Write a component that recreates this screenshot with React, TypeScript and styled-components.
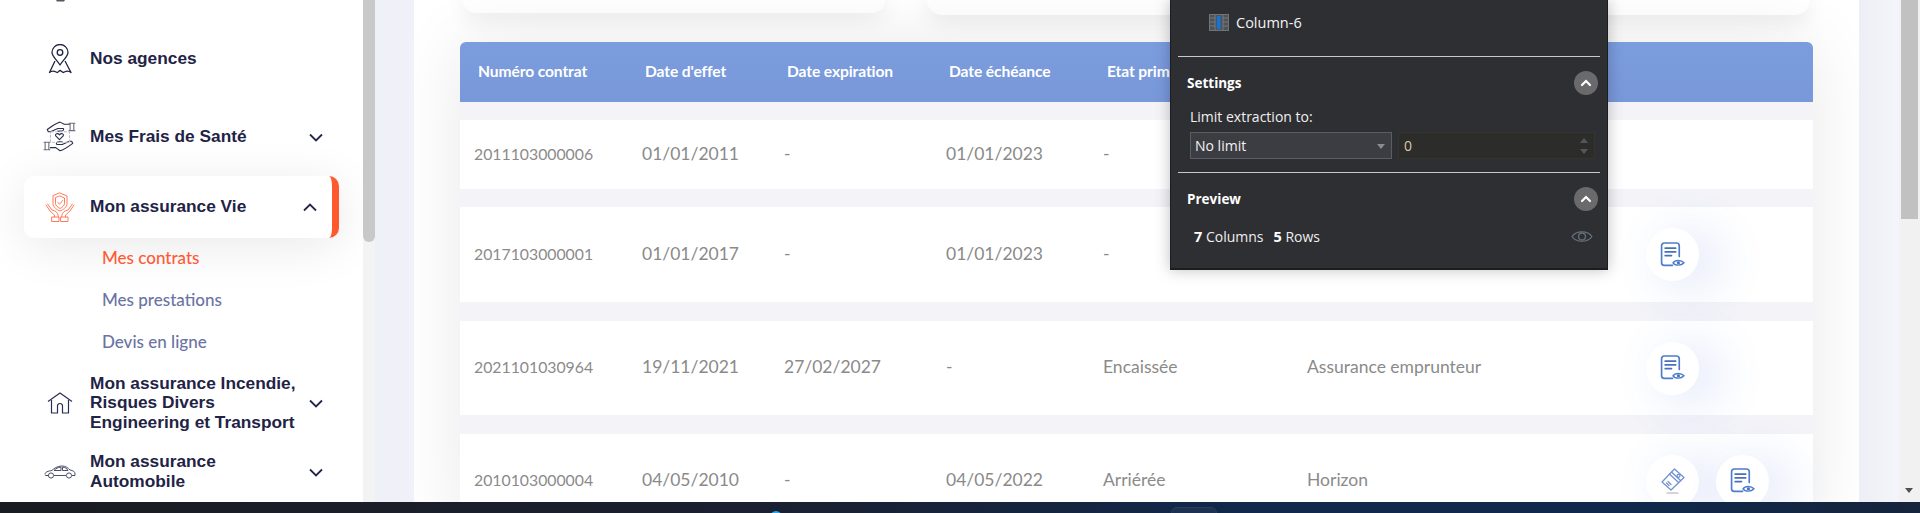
import React from "react";
import styled, { createGlobalStyle } from "styled-components";

const Global = createGlobalStyle`
  html, body { margin: 0; padding: 0; height: 100%; overflow: hidden; background: #fff; }
  * { box-sizing: border-box; }
`;

const Page = styled.div`
  position: relative; width: 1920px; height: 513px; overflow: hidden;
  display: flex; flex-direction: column;
`;
const Main = styled.div`
  position: relative; flex: none; height: 502px; display: flex; overflow: hidden; background: #f0f1f8;
`;
const Taskbar = styled.div`
  position: relative; flex: none; height: 11px; overflow: hidden;
  background: linear-gradient(90deg, #1b1c22 0%, #1a2030 40%, #11284a 65%, #10284a 85%, #16243c 100%);
`;
const TaskDot = styled.span`
  position: absolute; left: 770px; top: 9px; width: 12px; height: 12px; border-radius: 50%; background: #2aa7ee;
`;
const TaskPill = styled.span`
  position: absolute; left: 1171px; top: 5px; width: 46px; height: 12px; border-radius: 6px; background: #1f3150;
  border: 1px solid #2b3d5c;
`;

const Sidebar = styled.aside`
  flex: none; width: 363px; height: 100%; background: #fff; display: flex; flex-direction: column;
  font-family: "Liberation Sans", Arial, sans-serif; overflow: hidden;
`;
const Cut = styled.svg`display: block; margin-left: 53px; margin-bottom: 18px; flex: none;`;
const NavRow = styled.div<{ $h: number; $active?: boolean }>`
  flex: none; height: ${(p) => p.$h}px; margin-left: 24px; width: 315px;
  display: flex; align-items: center; padding: 0 ${(p) => (p.$active ? 15 : 16)}px 0 12px;
  color: #1f2345;
  ${(p) =>
    p.$active
      ? `background:#fff;border-radius:10px;border-right:7px solid #ff5a2d;box-shadow:0 8px 50px rgba(0,0,0,.09);`
      : ``}
`;
const NavIcon = styled.span`
  flex: none; width: 48px; margin-right: 6px; display: flex; align-items: center; justify-content: center;
`;
const NavLabel = styled.span`
  flex: 1; font-size: 17.3px; line-height: 19.6px; font-weight: 700; color: #1f2345; white-space: nowrap;
`;
const Chevron = styled.svg`flex: none; display: block;`;
const SubList = styled.div`flex: none; margin: -2px 0 1px;`;
const SubItem = styled.div<{ $active?: boolean }>`
  height: 42px; padding-left: 102px; display: flex; align-items: center;
  font-family: Lato, sans-serif; font-size: 17px; font-weight: 500;
  color: ${(p) => (p.$active ? "#ff5a36" : "#6a73a3")};
`;
const Rail = styled.div`
  flex: none; width: 12px; height: 100%; background: #f3f3f3;
`;
const RailThumb = styled.div`
  width: 12px; height: 242px; background: #c8c8c8; border-radius: 0 0 6px 6px;
`;
const Gutter = styled.div<{ $w: number; $flip?: boolean }>`
  flex: none; width: ${(p) => p.$w}px; height: 100%;
  background: linear-gradient(90deg, ${(p) => (p.$flip ? "#eeeff6, #f4f5fb" : "#eef0f7, #f1f2f9")});
`;
const Content = styled.main`
  flex: none; width: 1445px; height: 100%; background: #fff; padding: 0 46px; overflow: hidden;
  display: flex; flex-direction: column;
`;
const CardsRow = styled.div`
  flex: none; height: 15px; display: flex; align-items: flex-start; padding-left: 3px; gap: 42px;
`;
const TopCard = styled.div<{ $w: number; $h: number }>`
  flex: none; width: ${(p) => p.$w}px; height: ${(p) => p.$h}px; background: #fff;
  border-radius: 0 0 32px 32px; box-shadow: 0 4px 22px rgba(0,0,0,.11);
`;
const Table = styled.div`
  flex: none; margin-top: 27px; box-shadow: 0 0 70px rgba(0,0,0,.09);
  background: #f3f3f8; display: flex; flex-direction: column; border-radius: 8px 8px 0 0;
  font-family: Lato, sans-serif;
`;
const Head = styled.div`
  height: 60px; flex: none; background: linear-gradient(180deg, #7b9cdd, #7898da); border-radius: 6px 6px 0 0;
  display: grid; grid-template-columns: 167px 142px 162px 158px 1fr; align-items: center; padding: 0 0 2px 18px;
  color: #fff; font-size: 15.6px; font-weight: 700; letter-spacing: -0.1px;
`;
const Row = styled.div<{ $h: number; $gap: number }>`
  height: ${(p) => p.$h}px; flex: none; margin-top: ${(p) => p.$gap}px; background: #fff;
  display: grid; grid-template-columns: 168px 142px 162px 157px 204px 339px 1fr; align-items: center; padding-left: 14px;
  color: #8b8a8a; font-size: 17.5px;
  & > span { padding-bottom: 3px; }
`;
const NumCell = styled.span`font-size: 15.8px;`;
const Actions = styled.div`display: flex; gap: 17px;`;
const ActionBtn = styled.div`
  flex: none; width: 53px; height: 53px; border-radius: 50%; background: #fff; display: flex; align-items: center; justify-content: center;
  box-shadow: 18px 6px 50px rgba(70,110,220,.2);
`;
const PageBar = styled.div`
  position: relative; flex: none; width: 21px; height: 100%; background: #f1f1f1; padding-left: 2px;
`;
const PageThumb = styled.div`width: 17px; height: 219px; background: #c1c1c1;`;
const ArrowDown = styled.span`
  position: absolute; left: 6px; top: 488px; width: 0; height: 0;
  border-left: 4.5px solid transparent; border-right: 4.5px solid transparent; border-top: 5px solid #505050;
`;

const Panel = styled.section`
  position: absolute; left: 1170px; top: 0; width: 438px; height: 270px;
  background: #2e2f33; border: 1px solid #1d1d1f; border-top: 0; border-bottom-width: 2px;
  box-shadow: 0 0 14px rgba(0,0,0,.25); color: #fff; font-family: "Open Sans", sans-serif; font-size: 14px;
  display: flex; flex-direction: column; padding: 0 7px;
`;
const ColumnLine = styled.div`
  flex: none; height: 57px; padding: 14px 0 0 31px; display: flex; align-items: flex-start; gap: 7px; line-height: 17px; border-bottom: 1px solid #c8c8c8;
  color: #f3f3f3; font-size: 14.5px;
`;
const SectionHead = styled.div<{ $top: number }>`
  flex: none; height: 33px; margin-top: ${(p) => p.$top}px; display: flex; align-items: center; justify-content: space-between; padding: 0 2px 0 9px;
  font-weight: 700; font-size: 13.5px;
`;
const RoundBtn = styled.span`
  width: 24px; height: 24px; border-radius: 50%; background: #6a6a6c; display: flex; align-items: center; justify-content: center;
`;
const Hint = styled.div`flex: none; margin: 9px 0 0 12px; height: 18px; line-height: 18px; color: #f0f0f0;`;
const LimitRow = styled.div`flex: none; margin: 6px 0 0 12px; display: flex; gap: 6px;`;
const SelectBox = styled.div`
  position: relative; width: 202px; height: 27px; background: #3c3d42; border: 1px solid #5c5d62; padding-left: 4px; line-height: 25px; color: #f2f2f2;
`;
const SelectCaret = styled.span`
  position: absolute; right: 6px; top: 11px; width: 0; height: 0;
  border-left: 4px solid transparent; border-right: 4px solid transparent; border-top: 5px solid #8b8c90;
`;
const NumberBox = styled.div`
  position: relative; width: 197px; height: 27px; background: #2c2d2b; border: 1px solid #34352f; padding-left: 5px; line-height: 25px; color: #d8c9a8;
`;
const Spin = styled.span<{ $down?: boolean }>`
  position: absolute; right: 6px; top: ${(p) => (p.$down ? 16 : 5)}px; width: 0; height: 0;
  border-left: 4px solid transparent; border-right: 4px solid transparent;
  ${(p) => (p.$down ? "border-top: 5px solid #55565a;" : "border-bottom: 5px solid #55565a;")}
`;
const Divider = styled.div`flex: none; height: 1px; background: #c8c8c8; margin-top: 13px;`;
const PreviewLine = styled.div`
  flex: none; margin-top: 12px; display: flex; align-items: center; justify-content: space-between; padding: 0 7px 0 16px; height: 18px; color: #eee;
`;
const Bold = styled.b`font-weight: 700; font-size: 14.5px; color: #fff;`;
const Spacer = styled.span`display: inline-block; width: 10px;`;

const ChevronDown = () => (
  <Chevron width="14" height="9" viewBox="0 0 14 9"><path d="M1 1.500 7 7.500 13 1.500" fill="none" stroke="#23264a" strokeWidth="1.800" /></Chevron>
);
const ChevronUp = () => (
  <Chevron width="14" height="9" viewBox="0 0 14 9"><path d="M1 7.500 7 1.500 13 7.500" fill="none" stroke="#23264a" strokeWidth="1.800" /></Chevron>
);
const PinIcon = () => (
  <svg width="24" height="30" viewBox="0 0 24 30" fill="none" stroke="#1f2345" strokeWidth="1.300" strokeLinejoin="round">
    <path d="M12 21 C9 16 4 12.500 4 8.500 A8 8 0 0 1 20 8.500 C20 12.500 15 16 12 21Z" />
    <circle cx="12" cy="8.500" r="2.800" />
    <path d="M7 17 1.500 28.500 C5 25.500 7 27.500 9 28.500 C10.500 28.500 11 26.500 12 26.500 C13 26.500 14 28.500 15.500 28.500 C17.500 27.500 19.500 25.500 23 28.500 L17 17" />
  </svg>
);
const CareIcon = () => (
  <svg width="34" height="34" viewBox="0 0 32 32" fill="none" stroke="#2a2d4c" strokeWidth="1.050" strokeLinejoin="round" strokeLinecap="round">
    <path d="M25 4 H20 L16 2 C12 3 8 6 4 9 L5 11 L7 11 L14 8 H19 C20 9 19 10.500 17 10.500 H14" />
    <path d="M25.500 3 V10 M29 3 V10 M24.500 3 H30 M24.500 10 H30" stroke="#6d6f80" />
    <path d="M7 26 H12 L16 29 C20 28 24 25 28 22 L27 20 L25 20 L18 23 H13 C12 22 13 20.500 15 20.500 H18" />
    <path d="M2 21 V28 M5.500 21 V28 M1 21 H6.500 M1 28 H6.500" stroke="#6d6f80" />
    <rect x="7" y="11" width="18" height="10" rx="1" stroke="#b9bac5" strokeDasharray="2 2" />
    <path d="M15.500 18.500 L12 15 C11 13 14 12 15.500 14 C17 12 20 13 19 15Z" />
  </svg>
);
const ShieldHands = () => (
  <svg width="30" height="30" viewBox="0 0 30 30" fill="none" stroke="#ff7a5c" strokeWidth="1" strokeLinejoin="round" strokeLinecap="round">
    <path d="M15 1 L22 4 V12 C22 15 18 18 15 19 C12 18 8 15 8 12 V4Z" />
    <path d="M15 4 L19.500 6 V11.500 C19.500 13.500 17 15.500 15 16.500 C13 15.500 10.500 13.500 10.500 11.500 V6Z" />
    <path d="M12.800 10.500 L14.500 12.300 L17.500 8.500" />
    <path d="M1 13 L5 19 L9.500 23 V25 M2.500 12 L7 18 L10 19 C12 20 13 22 13.500 25" />
    <path d="M29 13 L25 19 L20.500 23 V25 M27.500 12 L23 18 L20 19 C18 20 17 22 16.500 25" />
    <rect x="7" y="25" width="7" height="4.500" />
    <rect x="16" y="25" width="7" height="4.500" />
  </svg>
);
const HouseIcon = () => (
  <svg width="26" height="22" viewBox="0 0 26 22" fill="none" stroke="#2b2e55" strokeWidth="1.200" strokeLinejoin="round">
    <path d="M1 9.500 13 1 25 9.500" />
    <path d="M4.500 8 V21 H10.500 V14 A2.500 2.500 0 0 1 15.500 14 V21 H21.500 V8" />
  </svg>
);
const CarIcon = () => (
  <svg width="32" height="14" viewBox="0 0 32 14" fill="none" stroke="#3a3c5a" strokeWidth="0.900" strokeLinejoin="round">
    <path d="M1 9.500 C1 7 4 6 8 5.500 C10 3.500 13 1 18 1 C22 1 24 3 26 5 C29 5.500 31 6.500 31 9 V10.500 H28 M22 10.500 H10 M4.500 10.500 H1.500Z" />
    <path d="M10 5.500 C12 3.500 14 2.300 17 2.200 V5.500 Z M18.500 2.200 C21 2.200 23 3.500 24 5.500 H18.500 Z" />
    <circle cx="7" cy="10.500" r="2.600" /><circle cx="25" cy="10.500" r="2.600" />
  </svg>
);
const DocEye = () => (
  <svg width="25" height="26" viewBox="0 0 24 25" fill="none" strokeLinecap="round">
    <path d="M12 22.500 H4 A2.500 2.500 0 0 1 1.500 20 V3.500 A2.500 2.500 0 0 1 4 1 H16 A2.500 2.500 0 0 1 18.500 3.500 V14" stroke="#4d7ccc" strokeWidth="1.600" />
    <path d="M5 6 H15 M5 9.500 H15 M5 13 H11" stroke="#4870ba" strokeWidth="1.700" />
    <path d="M12.500 20 C14.500 17 20.500 17 23 20 C20.500 23 14.500 23 12.500 20Z" stroke="#4d7ccc" strokeWidth="1.400" />
    <circle cx="17.700" cy="20" r="1.500" fill="#4870ba" />
  </svg>
);
const CardIcon = () => (
  <svg width="24" height="26" viewBox="0 0 24 26" fill="none" stroke="#6f8fd0" strokeWidth="1.200" strokeLinejoin="round" strokeLinecap="round">
    <path d="M13.500 1 L23 9.500 L10 22 L1 14Z" />
    <path d="M10.500 4 L19.500 12.500 M8.500 6 L17.500 14.500" />
    <circle cx="17.500" cy="7.800" r="1.500" />
    <path d="M7 13.500 L10 16.500 M5.500 15 L8 17.500" />
    <path d="M6 25 H17" stroke="#b5a4b6" />
  </svg>
);
const ColumnGlyph = () => (
  <svg width="20" height="17" viewBox="0 0 20 17">
    <rect x="0.500" y="0.500" width="19" height="16" fill="#4f5257" stroke="#70747a" />
    <path d="M6 1 V16 M14 1 V16 M1 4 H6 M1 8 H6 M1 12 H6 M14 4 H19 M14 8 H19 M14 12 H19" stroke="#767a80" fill="none" />
    <rect x="8" y="2" width="3.500" height="13" fill="#1374dd" />
  </svg>
);
const CollapseGlyph = () => (
  <svg width="12" height="8" viewBox="0 0 12 8"><path d="M2 6 6 2 10 6" fill="none" stroke="#fff" strokeWidth="2.200" strokeLinecap="round" /></svg>
);
const EyeGlyph = () => (
  <svg width="22" height="15" viewBox="0 0 21 14" fill="none" stroke="#66727c" strokeWidth="1.200">
    <path d="M1 7 C5 1 16 1 20 7 C16 13 5 13 1 7Z" /><circle cx="10.500" cy="7" r="3.300" />
  </svg>
);

export default function App() {
  return (
    <Page>
      <Global />
      <Main>
        <Sidebar>
          <Cut width="15" height="2" viewBox="0 0 15 2"><path d="M3 0 H12 L11 1.500 H4Z" fill="#555766" /></Cut>
          <NavRow $h={78}>
            <NavIcon><PinIcon /></NavIcon><NavLabel>Nos agences</NavLabel>
          </NavRow>
          <NavRow $h={78}>
            <NavIcon><CareIcon /></NavIcon><NavLabel>Mes Frais de Santé</NavLabel><ChevronDown />
          </NavRow>
          <NavRow $h={62} $active>
            <NavIcon><ShieldHands /></NavIcon><NavLabel>Mon assurance Vie</NavLabel><ChevronUp />
          </NavRow>
          <SubList>
            <SubItem $active>Mes contrats</SubItem>
            <SubItem>Mes prestations</SubItem>
            <SubItem>Devis en ligne</SubItem>
          </SubList>
          <NavRow $h={80}>
            <NavIcon><HouseIcon /></NavIcon>
            <NavLabel>Mon assurance Incendie,<br />Risques Divers<br />Engineering et Transport</NavLabel>
            <ChevronDown />
          </NavRow>
          <NavRow $h={58}>
            <NavIcon><CarIcon /></NavIcon>
            <NavLabel>Mon assurance<br />Automobile</NavLabel>
            <ChevronDown />
          </NavRow>
        </Sidebar>
        <Rail><RailThumb /></Rail>
        <Gutter $w={39} />
        <Content>
          <CardsRow>
            <TopCard $w={422} $h={13} />
            <TopCard $w={883} $h={15} />
          </CardsRow>
          <Table>
            <Head>
              <span>Numéro contrat</span>
              <span>Date d'effet</span>
              <span>Date expiration</span>
              <span>Date échéance</span>
              <span>Etat prime</span>
            </Head>
            <Row $h={69} $gap={18}>
              <NumCell>2011103000006</NumCell><span>01/01/2011</span><span>-</span><span>01/01/2023</span><span>-</span><span />
            </Row>
            <Row $h={95} $gap={18}>
              <NumCell>2017103000001</NumCell><span>01/01/2017</span><span>-</span><span>01/01/2023</span><span>-</span><span />
              <Actions><ActionBtn><DocEye /></ActionBtn></Actions>
            </Row>
            <Row $h={94} $gap={19}>
              <NumCell>2021101030964</NumCell><span>19/11/2021</span><span>27/02/2027</span><span>-</span><span>Encaissée</span><span>Assurance emprunteur</span>
              <Actions><ActionBtn><DocEye /></ActionBtn></Actions>
            </Row>
            <Row $h={94} $gap={19}>
              <NumCell>2010103000004</NumCell><span>04/05/2010</span><span>-</span><span>04/05/2022</span><span>Arriérée</span><span>Horizon</span>
              <Actions><ActionBtn><CardIcon /></ActionBtn><ActionBtn><DocEye /></ActionBtn></Actions>
            </Row>
          </Table>
        </Content>
        <Gutter $w={40} $flip />
        <PageBar><PageThumb /><ArrowDown /></PageBar>
        <Panel>
          <ColumnLine><ColumnGlyph />Column-6</ColumnLine>
          <SectionHead $top={9}>Settings<RoundBtn><CollapseGlyph /></RoundBtn></SectionHead>
          <Hint>Limit extraction to:</Hint>
          <LimitRow>
            <SelectBox>No limit<SelectCaret /></SelectBox>
            <NumberBox>0<Spin /><Spin $down /></NumberBox>
          </LimitRow>
          <Divider />
          <SectionHead $top={9}>Preview<RoundBtn><CollapseGlyph /></RoundBtn></SectionHead>
          <PreviewLine>
            <span><Bold>7</Bold> Columns<Spacer /><Bold>5</Bold> Rows</span>
            <EyeGlyph />
          </PreviewLine>
        </Panel>
      </Main>
      <Taskbar><TaskDot /><TaskPill /></Taskbar>
    </Page>
  );
}
